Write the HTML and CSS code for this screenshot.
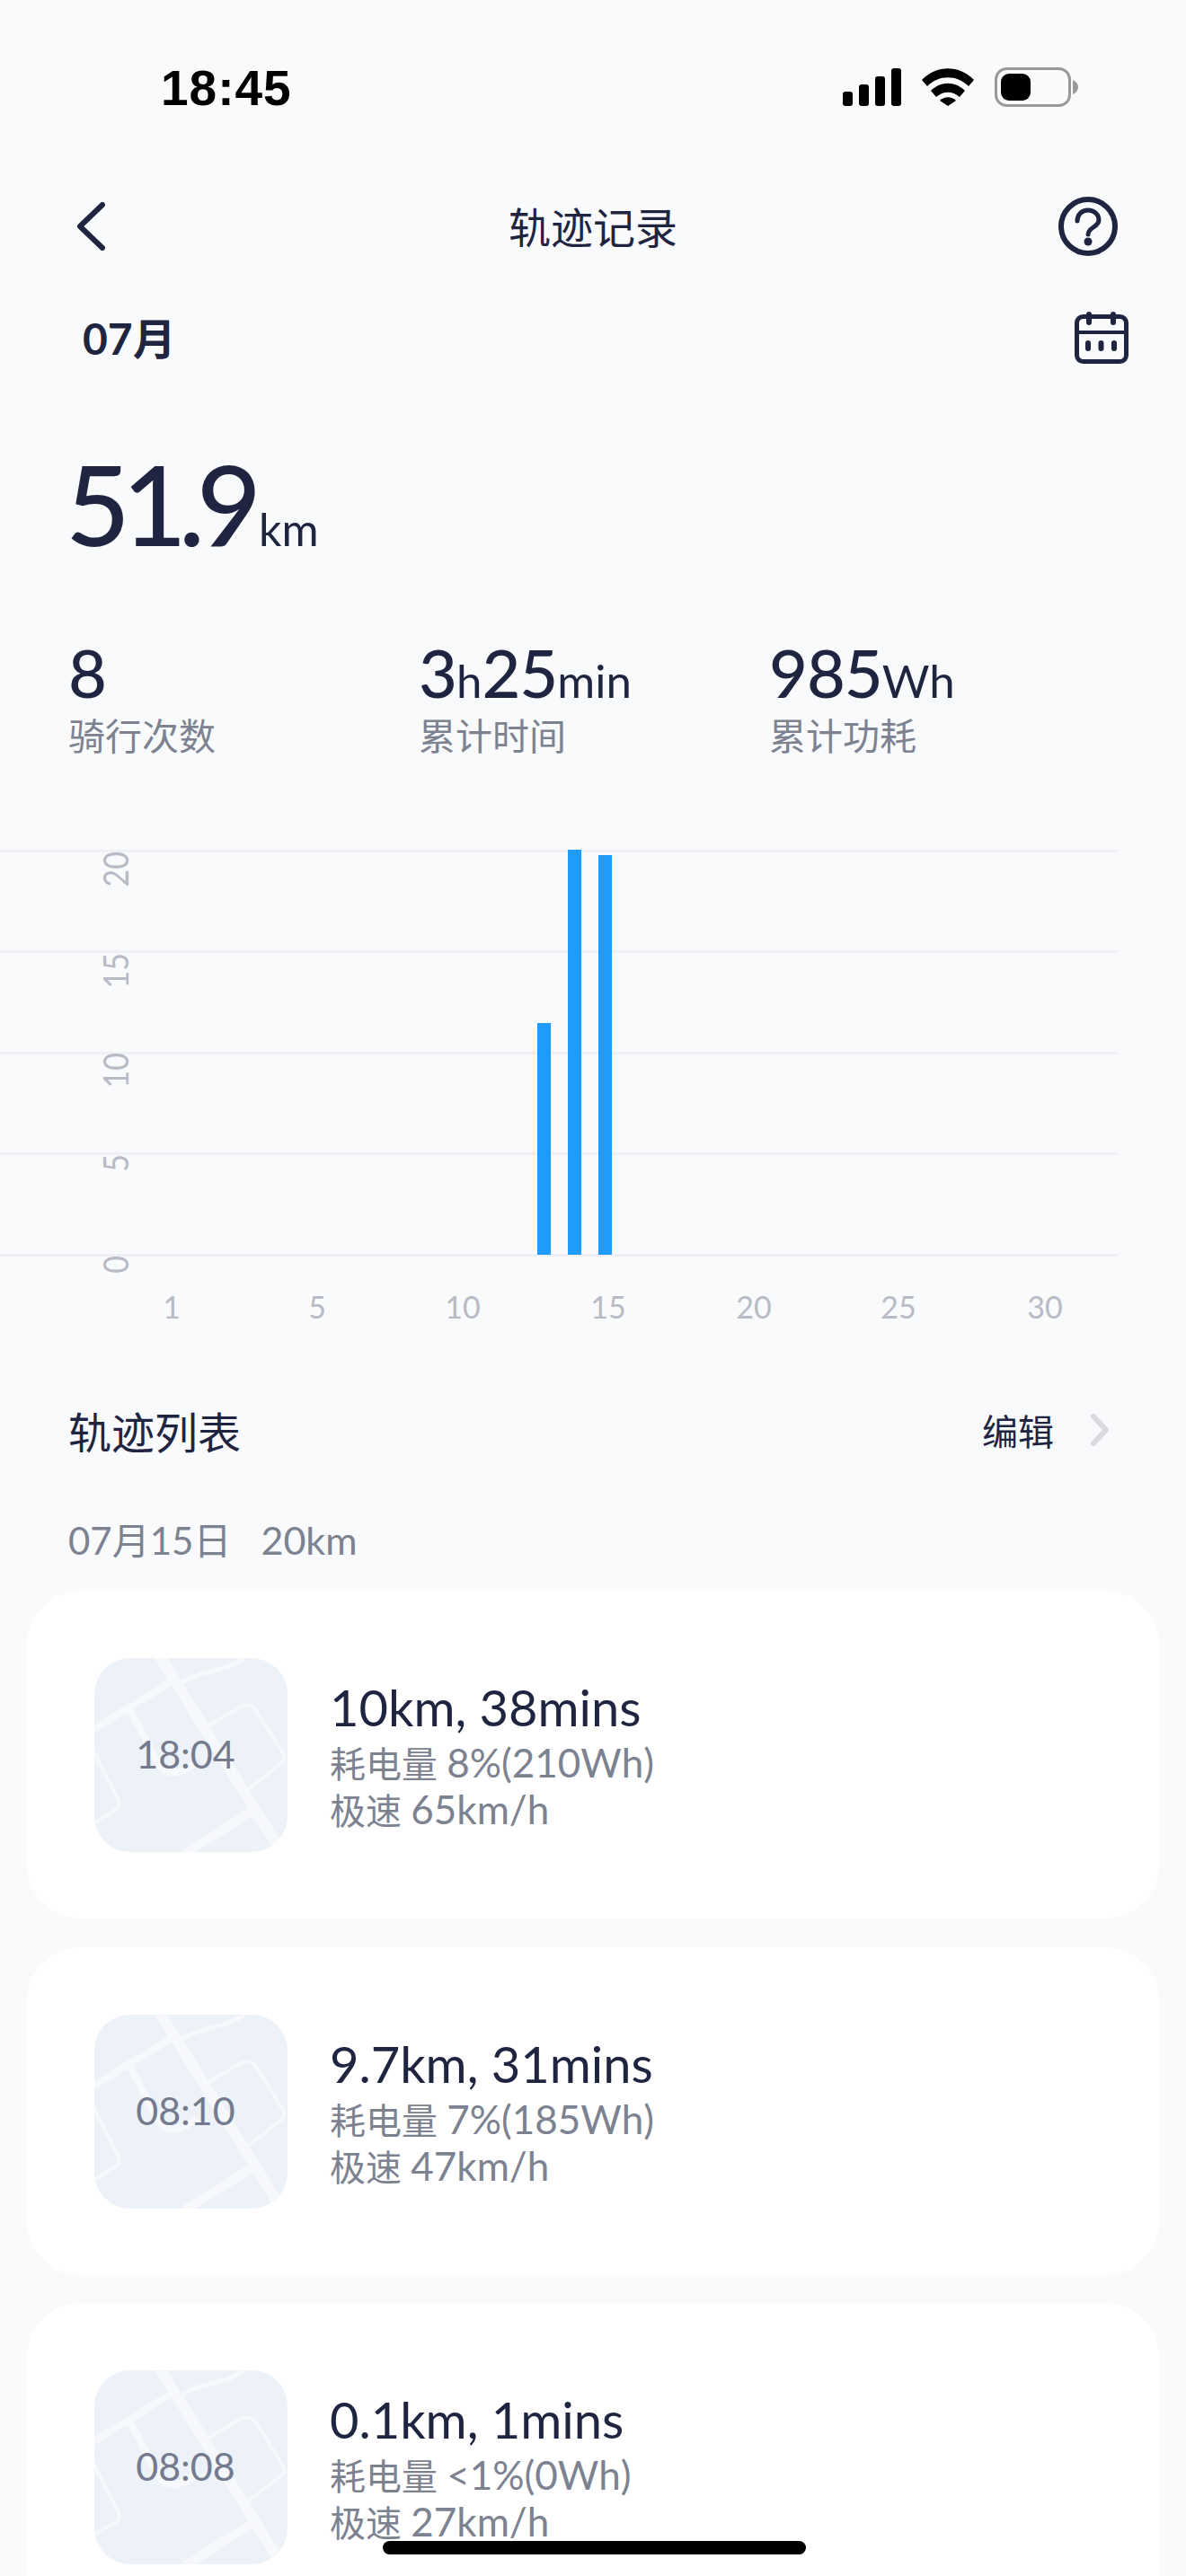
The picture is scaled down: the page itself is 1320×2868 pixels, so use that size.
FILE: index.html
```html
<!DOCTYPE html>
<html>
<head>
    <title>轨迹记录</title>
    <link rel="stylesheet" href="styles.css">
</head>
<body>
    <div class="status-bar">
        <span class="clock">18:45</span>
        <div class="status-icons">
            <svg width="65" height="42" viewBox="0 0 65 42"><rect x="0" y="26" width="11" height="16" rx="3"/><rect x="18" y="18" width="11" height="24" rx="3"/><rect x="36" y="9" width="11" height="33" rx="3"/><rect x="54" y="0" width="11" height="42" rx="3"/></svg>
            <svg width="58" height="42" viewBox="0 0 58 42"><path d="M0 13 C16 -4 42 -4 58 13 L52 20 C39 7 19 7 6 20Z"/><path d="M10 25 C21 14 37 14 48 25 L42 32 C34 25 24 25 16 32Z"/><path d="M20 36 C25 31 33 31 38 36 L29 42Z"/></svg>
            <svg width="93" height="44" viewBox="0 0 93 44"><rect x="1.5" y="1.5" width="82" height="41" rx="12" fill="none" stroke="#999" stroke-width="3"/><rect x="7" y="7" width="33" height="30" rx="9"/><path d="M87 14 Q93 17 93 22 Q93 27 87 30Z" fill="#999"/></svg>
        </div>
    </div>

    <div class="nav">
        <svg class="nav-back" width="34" height="54" viewBox="0 0 34 54"><path d="M30 3 L5 27 L30 51" fill="none" stroke="#1f2540" stroke-width="6" stroke-linecap="round" stroke-linejoin="round"/></svg>
        <h1 class="nav-title">轨迹记录</h1>
        <svg class="nav-help" width="66" height="66" viewBox="0 0 66 66"><circle cx="33" cy="33" r="30" fill="none" stroke="#1f2540" stroke-width="6"/><path d="M21 27 C21 20 26 15 33 15 C40 15 45 20 45 26 C45 34 33 34 33 42" fill="none" stroke="#1f2540" stroke-width="5" stroke-linecap="round"/><circle cx="33" cy="50" r="4.5" fill="#1f2540"/></svg>
    </div>

    <div class="month-row">
        <span class="month">07月</span>
        <svg width="60" height="58" viewBox="0 0 60 58"><rect x="2.5" y="5.5" width="55" height="50" rx="7" fill="none" stroke="#1f2540" stroke-width="5"/><path d="M3 23 H57" stroke="#1f2540" stroke-width="4"/><path d="M16 3 V12 M43 3 V12 M15 35 V41 M29.500 35 V41 M44 35 V41" stroke="#1f2540" stroke-width="6" stroke-linecap="round"/></svg>
    </div>

    <div class="total"><span class="total-num">51.9</span><span class="total-unit">km</span></div>

    <div class="stats">
        <div class="stat">
            <div class="stat-val"><b>8</b></div>
            <div class="stat-label">骑行次数</div>
        </div>
        <div class="stat">
            <div class="stat-val"><b>3</b>h<b>25</b>min</div>
            <div class="stat-label">累计时间</div>
        </div>
        <div class="stat">
            <div class="stat-val"><b>985</b>Wh</div>
            <div class="stat-label">累计功耗</div>
        </div>
    </div>

    <svg class="chart" width="1320" height="540" viewBox="0 0 1320 540">
        <g fill="#eef0f3">
            <rect x="0" y="0" width="1245" height="3"/>
            <rect x="0" y="112" width="1245" height="3"/>
            <rect x="0" y="225" width="1245" height="3"/>
            <rect x="0" y="337" width="1245" height="3"/>
            <rect x="0" y="450" width="1245" height="3"/>
        </g>
        <g fill="#1e9bfb">
            <rect x="598" y="193" width="15" height="258"/>
            <rect x="632" y="0" width="15" height="451"/>
            <rect x="666" y="6" width="15" height="445"/>
        </g>
        <g class="tick-y" text-anchor="end">
            <text transform="translate(143 2) rotate(-90) scale(1 1.15)">20</text>
            <text transform="translate(143 115) rotate(-90) scale(1 1.15)">15</text>
            <text transform="translate(143 226) rotate(-90) scale(1 1.15)">10</text>
            <text transform="translate(143 339) rotate(-90) scale(1 1.15)">5</text>
            <text transform="translate(143 452) rotate(-90) scale(1 1.15)">0</text>
        </g>
        <g class="tick-x" text-anchor="middle">
            <text x="191" y="522">1</text>
            <text x="353" y="522">5</text>
            <text x="515" y="522">10</text>
            <text x="677" y="522">15</text>
            <text x="839" y="522">20</text>
            <text x="1000" y="522">25</text>
            <text x="1163" y="522">30</text>
        </g>
    </svg>

    <div class="list-head">
        <span class="list-title">轨迹列表</span>
        <div class="list-edit">
            <span>编辑</span>
            <svg width="22" height="36" viewBox="0 0 22 36"><path d="M4 3 L18 18 L4 33" fill="none" stroke="#d8dae0" stroke-width="6" stroke-linecap="round" stroke-linejoin="round"/></svg>
        </div>
    </div>
    <div class="list-date">07月15日<span class="list-date-km">20km</span></div>

    <div class="track">
        <div class="thumb">
            <svg class="thumb-map" width="215" height="216" viewBox="0 0 215 216"><use href="#roads"/></svg>
            <span class="thumb-time">18:04</span>
        </div>
        <div class="track-info">
            <div class="track-title">10km, 38mins</div>
            <div class="track-sub">耗电量 <span class="track-num">8%(210Wh)</span></div>
            <div class="track-sub">极速 <span class="track-num">65km/h</span></div>
        </div>
    </div>
    <div class="track">
        <div class="thumb">
            <svg class="thumb-map" width="215" height="216" viewBox="0 0 215 216"><use href="#roads"/></svg>
            <span class="thumb-time">08:10</span>
        </div>
        <div class="track-info">
            <div class="track-title">9.7km, 31mins</div>
            <div class="track-sub">耗电量 <span class="track-num">7%(185Wh)</span></div>
            <div class="track-sub">极速 <span class="track-num">47km/h</span></div>
        </div>
    </div>
    <div class="track">
        <div class="thumb">
            <svg class="thumb-map" width="215" height="216" viewBox="0 0 215 216"><use href="#roads"/></svg>
            <span class="thumb-time">08:08</span>
        </div>
        <div class="track-info">
            <div class="track-title">0.1km, 1mins</div>
            <div class="track-sub">耗电量 <span class="track-num">&lt;1%(0Wh)</span></div>
            <div class="track-sub">极速 <span class="track-num">27km/h</span></div>
        </div>
    </div>

    <div class="home-bar"></div>

    <!-- shared road shapes for the map thumbnails -->
    <svg width="0" height="0" class="defs">
        <defs>
            <g id="roads" fill="none" stroke="#f6f8fb">
                <path d="M71 -5 L207 214" stroke-width="12"/>
                <path d="M-5 82 L86 26" stroke-width="8"/>
                <path d="M96 28 C120 12 150 16 168 -2" stroke-width="5"/>
                <path d="M39 56 L71 117 C78 130 92 133 114 116" stroke-width="8"/>
                <path d="M126 76 L161 55 C168 51 176 52 180 58 L208 103 C213 110 212 114 207 118 L171 146" stroke-width="4"/>
                <path d="M100 218 L178 169" stroke-width="10"/>
                <path d="M-1 104 L26 156 C29 162 28 166 24 169 L-1 184" stroke-width="4"/>
            </g>
        </defs>
    </svg>
</body>
</html>
```

FILE: styles.css
```css
* {
    box-sizing: border-box;
}
html, body {
    height: 2868px;
    overflow: hidden;
}
body {
    margin: 0;
    background: #f8fafc;
    color: #1f2540;
    font-family: Lato, "Noto Sans CJK SC", sans-serif;
    position: relative;
}
.status-bar {
    height: 136px;
    padding: 71px 120px 0 179px;
    display: flex;
    justify-content: space-between;
    align-items: flex-start;
}
.clock {
    font-family: "Liberation Sans", sans-serif;
    font-weight: bold;
    font-size: 55px;
    line-height: 54px;
    letter-spacing: 1px;
    color: #000;
}
.status-icons {
    display: flex;
    align-items: center;
    gap: 23px;
    margin-top: 4px;
}
.nav {
    height: 96px;
    margin-top: 68px;
    padding: 0 76px 0 76px;
    display: grid;
    grid-template-columns: 1fr auto 1fr;
    align-items: center;
}
.nav-back {
    margin-left: 8px;
}
.nav-help {
    justify-self: end;
}
.nav-title {
    margin: 0 0 4px;
    font-size: 47px;
    font-weight: normal;
}
.month-row {
    margin-top: 41px;
    height: 70px;
    padding: 0 64px 0 92px;
    display: flex;
    justify-content: space-between;
    align-items: center;
}
.month {
    margin-bottom: 5px;
    font-size: 48px;
    font-weight: bold;
}
.total {
    margin-top: 84px;
    padding-left: 73px;
    display: flex;
    align-items: baseline;
    height: 130px;
}
.total-num {
    font-size: 124px;
    font-weight: 500;
    line-height: 130px;
    letter-spacing: -9px;
}
.total-unit {
    font-size: 50px;
    margin-left: 6px;
}
.stats {
    margin-top: 88px;
    padding-left: 76px;
    display: grid;
    grid-template-columns: 390px 390px 1fr;
}
.stat-val {
    font-size: 51px;
    height: 72px;
    line-height: 72px;
    white-space: nowrap;
}
.stat-val b {
    font-size: 74px;
    font-weight: 500;
    letter-spacing: -1px;
}
.stat-label {
    margin-top: 10px;
    font-size: 41px;
    line-height: 50px;
    color: #7d8291;
}
.chart {
    display: block;
    margin-top: 101px;
}
.tick-y text, .tick-x text {
    font-size: 34px;
    fill: #b8bbc5;
}
.list-head {
    margin-top: 71px;
    padding: 0 85px 0 76px;
    display: flex;
    justify-content: space-between;
    align-items: center;
    height: 70px;
}
.list-title {
    font-size: 48px;
}
.list-edit {
    display: flex;
    align-items: center;
    gap: 40px;
    font-size: 40px;
}
.list-date {
    margin: 60px 0 28px;
    padding-left: 76px;
    font-size: 42px;
    line-height: 56px;
    color: #7d8291;
}
.list-date-km {
    margin-left: 33px;
    font-size: 43px;
}
.track {
    margin: 0 30px 31.5px;
    height: 365px;
    padding: 75px;
    background: #fff;
    border-radius: 60px;
    display: flex;
    gap: 47px;
}
.thumb {
    width: 215px;
    height: 216px;
    flex-shrink: 0;
    padding: 0 12px 3px 0;
    background: #edf2f9;
    border-radius: 40px;
    overflow: hidden;
    position: relative;
    display: flex;
    justify-content: center;
    align-items: center;
}
.thumb-map {
    position: absolute;
    top: 0;
    left: 0;
}
.thumb-time {
    position: relative;
    font-size: 43px;
    color: #747b8e;
}
.track-info {
    padding-top: 20px;
}
.track-title {
    font-size: 56px;
    line-height: 70px;
    white-space: nowrap;
}
.track-sub {
    font-size: 40px;
    height: 52px;
    line-height: 52px;
    color: #7d8291;
    white-space: nowrap;
}
.track-num {
    font-size: 44px;
}
.home-bar {
    position: absolute;
    left: 426px;
    top: 2829px;
    width: 471px;
    height: 15px;
    border-radius: 8px;
    background: #000;
}
.defs {
    position: absolute;
}
```
